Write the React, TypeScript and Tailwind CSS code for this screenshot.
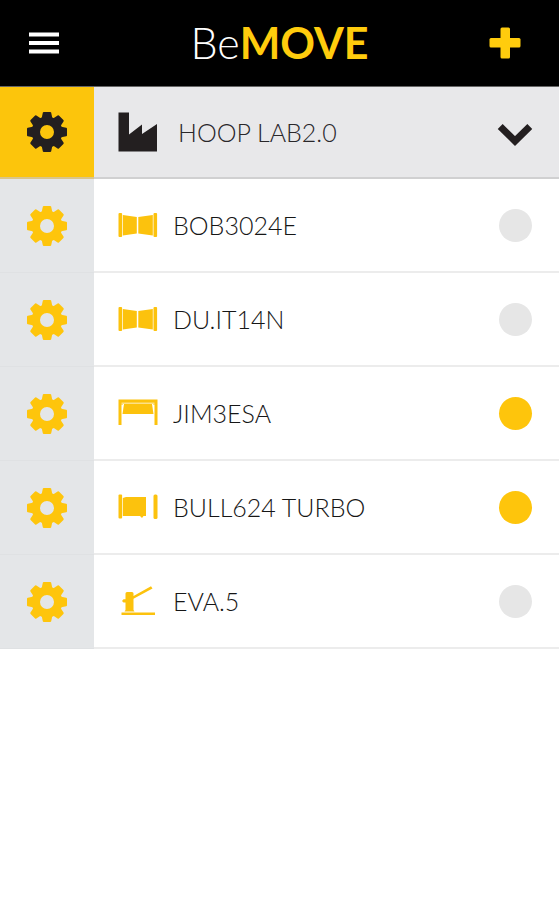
import { useState, type ReactNode } from "react";

const ANGLES = [0, 45, 90, 135, 180, 225, 270, 315];

function Gear() {
  return (
    <svg viewBox="-20 -20 40 40" className="size-10" fill="currentColor" aria-hidden="true">
      <circle r="11.2" fill="none" stroke="currentColor" strokeWidth="8.4" />
      {ANGLES.map((angle) => (
        <path key={angle} d="M-5.5 -13 -4.2 -19.2Q-4 -20 -3.2 -20H3.2Q4 -20 4.2 -19.2L5.5 -13Z" transform={`rotate(${angle})`} />
      ))}
    </svg>
  );
}

function Factory() {
  return (
    <svg viewBox="0 0 40 40" className="size-10" fill="#231f20" aria-hidden="true">
      <path d="M0.5 0.5h10.500v22L24 12.500v9.500L39 12V39.500H0.5Z" />
    </svg>
  );
}

function DoubleGate() {
  return (
    <svg viewBox="0 0 40 28" className="h-7 w-10" fill="currentColor" aria-hidden="true">
      <rect x="0.500" y="2" width="3.600" height="24" rx="1" />
      <rect x="35.500" y="2" width="3.600" height="24" rx="1" />
      <path d="M4.800 4 18.800 6V22.500L4.800 24.500ZM34.800 4 20.300 6V22.500L34.800 24.500Z" />
    </svg>
  );
}

function GarageDoor() {
  return (
    <svg viewBox="0 0 40 28" className="h-7 w-10" fill="currentColor" aria-hidden="true">
      <path d="M0.500 0.500H39.500V26H36.500V3.500H3.500V26H0.500Z" />
      <path d="M6 5H34L35.500 15H4.500Z" />
      <path d="M3 3H37V6H35V5H5V6H3Z" opacity="0.5" />
    </svg>
  );
}

function SlidingGate() {
  return (
    <svg viewBox="0 0 40 28" className="h-7 w-10" fill="currentColor" aria-hidden="true">
      <rect x="0.500" y="1.500" width="3.600" height="24" rx="1" />
      <rect x="35.500" y="1.500" width="4" height="24.500" rx="1.500" />
      <path d="M4.800 5 8 4H28V23H25.500L24 25 22 23H4.800Z" />
    </svg>
  );
}

function Barrier() {
  return (
    <svg viewBox="0 0 40 36" className="h-9 w-10" fill="currentColor" aria-hidden="true">
      <path d="M3.500 29.500H37V32H3.500Z" />
      <path d="M7.500 10.500Q7.500 9 9 9H14Q15.500 9 15.500 10.500V13L33 3.200 34.500 5.500 15.500 15.800V27L16.500 28.500H6.500L7.500 27V19.500H5.500L4 18 5.500 16.200H7.500Z" />
    </svg>
  );
}

type Device = { name: string; icon: ReactNode; on: boolean };

const DEVICES: Device[] = [
  { name: "BOB3024E", icon: <DoubleGate />, on: false },
  { name: "DU.IT14N", icon: <DoubleGate />, on: false },
  { name: "JIM3ESA", icon: <GarageDoor />, on: true },
  { name: "BULL624 TURBO", icon: <SlidingGate />, on: true },
  { name: "EVA.5", icon: <Barrier />, on: false },
];

function DeviceRow({ name, icon, on }: Device) {
  const [active, setActive] = useState(on);
  return (
    <li className="flex h-[94px]">
      <button type="button" aria-label={`${name} settings`} className="flex w-[94px] shrink-0 items-center justify-center border-b border-[#dfe1e3] bg-[#e4e6e8] text-[#fec50c]">
        <Gear />
      </button>
      <label className="flex min-w-0 flex-1 items-center border-b-2 border-[#ececec] pr-[27px] pl-6">
        <span className="w-[55px] shrink-0 text-[#fcc20d]">{icon}</span>
        <span className="flex-1 truncate text-[#161616]">{name}</span>
        <input
          type="checkbox"
          checked={active}
          onChange={() => setActive(!active)}
          className="size-[33px] shrink-0 appearance-none rounded-full bg-[#e6e6e6] checked:bg-[#fec50c]"
        />
      </label>
    </li>
  );
}

export default function App() {
  const [open, setOpen] = useState(true);
  return (
    <div className="min-h-screen bg-white font-['Lato',sans-serif] text-[25px] leading-8 font-light">
      <header className="grid h-[87px] grid-cols-[94px_1fr_94px] items-center border-b border-[#666] bg-black">
        <button type="button" aria-label="Menu" className="flex h-full items-center pl-7">
          <svg viewBox="0 0 32 22" className="h-[22px] w-8" fill="white" aria-hidden="true">
            <path d="M1 0.500H31V4.500H1ZM1 9H31V13H1ZM1 17.500H31V21.500H1Z" />
          </svg>
        </button>
        <h1 className="text-center text-[43px] leading-[50px] text-white">
          Be<span className="font-bold text-[#ffcc0d]">MOVE</span>
        </h1>
        <button type="button" aria-label="Add device" className="flex h-full items-center justify-center pr-3.5">
          <svg viewBox="0 0 32 32" className="size-8" fill="#ffcc0d" aria-hidden="true">
            <rect x="0.500" y="11" width="31" height="9.500" rx="1.500" />
            <rect x="11.500" y="0.500" width="9.500" height="31" rx="1.500" />
          </svg>
        </button>
      </header>
      <main>
        <div className="flex h-[92px]">
          <button type="button" aria-label="HOOP LAB2.0 settings" className="flex w-[94px] shrink-0 items-center justify-center border-b-2 border-[#d9c58a] bg-[#fcc50c] text-[#231f20]">
            <Gear />
          </button>
          <button
            type="button"
            aria-expanded={open}
            onClick={() => setOpen(!open)}
            className="flex min-w-0 flex-1 items-center border-b-2 border-[#d0d0d1] bg-[#e8e8ea] pr-[26px] pl-6 text-left"
          >
            <span className="w-[60px] shrink-0"><Factory /></span>
            <span className="flex-1 truncate text-[#29272a]">HOOP LAB2.0</span>
            <svg viewBox="0 0 36 32" className="h-8 w-9 shrink-0" fill="none" stroke="#231f20" strokeWidth="7" strokeLinejoin="miter" aria-hidden="true">
              <path d="M3.200 10.500 18 25 32.800 10.500" />
            </svg>
          </button>
        </div>
        {open && <ul>{DEVICES.map((device) => <DeviceRow key={device.name} {...device} />)}</ul>}
      </main>
    </div>
  );
}
